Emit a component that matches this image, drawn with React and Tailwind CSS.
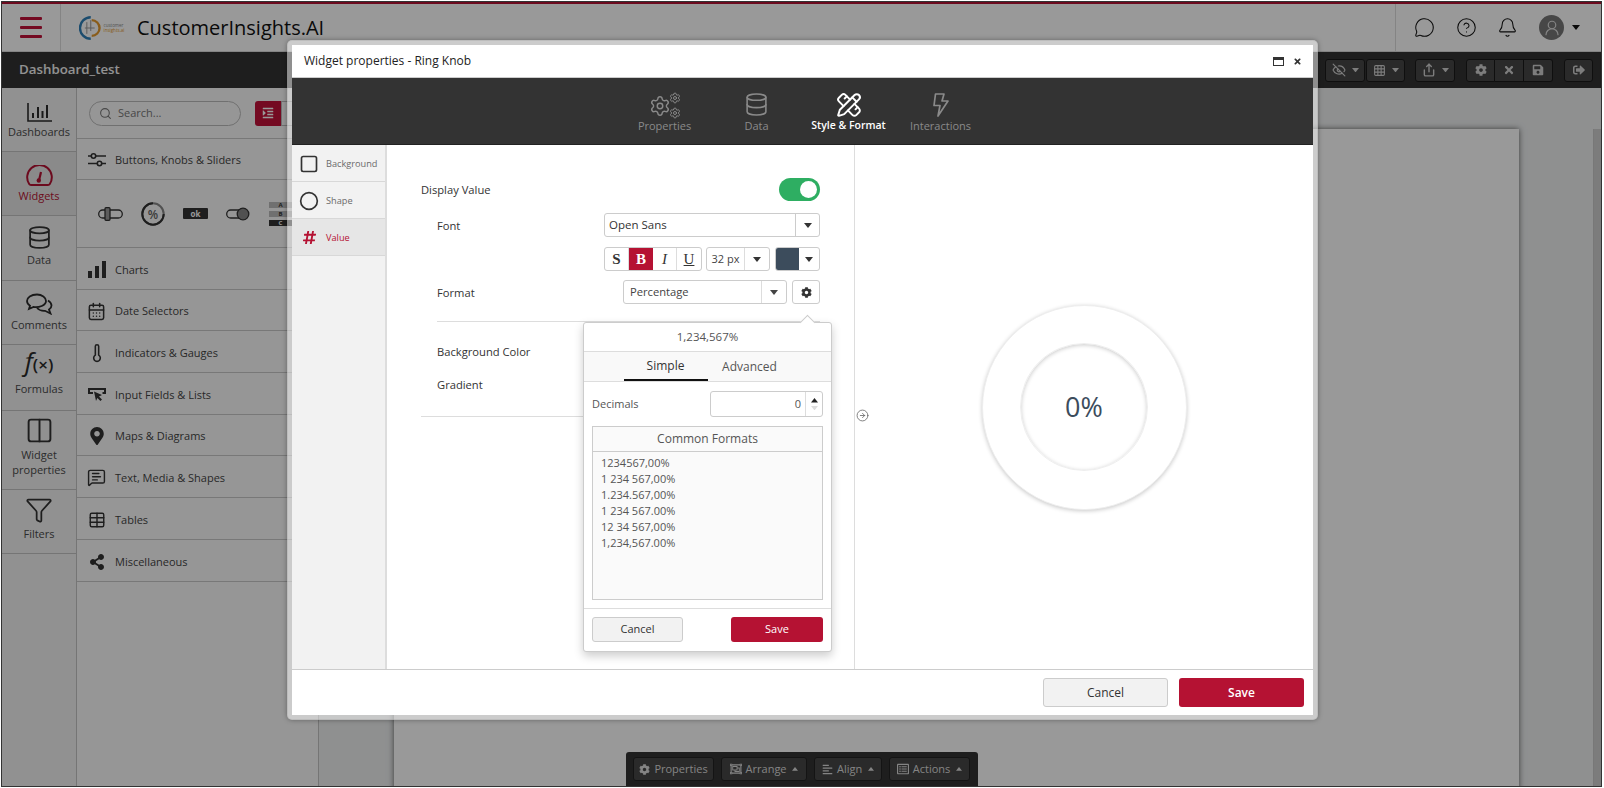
import React from "react";
import { Database, Columns2, Funnel, Thermometer, MessageSquareText, Table, Search, MessageCircle, CircleHelp, Bell, UserRound, Settings, PencilRuler, CircleArrowRight, EyeOff, Grid3x3, Share, Square, Circle, CalendarDays } from "lucide-react";
import { FaCog, FaTimes, FaSave, FaSignOutAlt, FaMapMarkerAlt, FaShareAlt, FaAlignLeft, FaRegObjectGroup, FaRegListAlt, FaIndent, FaHashtag } from "react-icons/fa";

function Caret({ up = false, className = "", w = 8 }) {
  return (
    <svg width={w} height={w * 0.625} viewBox="0 0 8 5" className={className} fill="currentColor">
      <path d={up ? "M0 5 L4 0 L8 5 Z" : "M0 0 L8 0 L4 5 Z"} />
    </svg>
  );
}

function SideItem({ h, label, icon, active }) {
  return (
    <div className={`flex flex-col items-center border-b border-[#c4c4c4] ${h} ${active ? "bg-[#e6e6e6] text-[#b51233]" : "text-[#333]"}`}>
      <div className="flex h-[36px] shrink-0 items-end justify-center pb-[2px]">{icon}</div>
      <div className={`text-center text-[11px] leading-[15px] ${active ? "text-[#b51233]" : "text-[#4a4a4a]"}`}>{label}</div>
    </div>
  );
}

function BarsIcon() {
  return (
    <svg width="25" height="19" viewBox="0 0 25 19" fill="none" stroke="#2b2b2b" strokeWidth="1.6">
      <path d="M1 0 V18 H25" />
      <path d="M6 15 V10 M11 15 V4 M15.5 15 V8 M20 15 V2" strokeWidth="2" />
    </svg>
  );
}

function GaugeIcon() {
  return (
    <svg width="27" height="21" viewBox="0 0 27 21" fill="none" stroke="#b51233" strokeWidth="2">
      <path d="M5 20 H22 Q23.2 20 23.8 19 A12.3 12.3 0 1 0 3.2 19 Q3.8 20 5 20 Z" />
      <path d="M13 15.5 L15 7" strokeWidth="2.2" />
      <circle cx="12.8" cy="15.5" r="2.2" fill="#b51233" stroke="none" />
    </svg>
  );
}

function CommentsIcon() {
  return (
    <svg width="28" height="22" viewBox="0 0 28 22" fill="none" stroke="#2b2b2b" strokeWidth="1.8">
      <path d="M12 1.5 C6 1.5 2 4.5 2 8 C2 10 3.2 11.6 5 12.7 L4 16 L8.5 14 C14 14.8 21 12.5 21 8 C21 4.5 17 1.5 12 1.5 Z" />
      <path d="M23 7.5 C25.5 9 26.5 10.5 26.5 12.5 C26.5 14.5 25.4 15.7 24 16.6 L25.5 20.5 L20 17.8 C16.5 18 13.8 17 12 15" />
    </svg>
  );
}

function SlidersIcon() {
  return (
    <svg width="18" height="14" viewBox="0 0 18 14" fill="none" stroke="#333" strokeWidth="1.6">
      <path d="M0 3 H18 M0 10.5 H18" />
      <circle cx="5.5" cy="3" r="2.2" fill="#fbfbfb" />
      <circle cx="11.5" cy="10.5" r="2.2" fill="#fbfbfb" />
    </svg>
  );
}

function InputIcon() {
  return (
    <svg width="18" height="14" viewBox="0 0 18 14" fill="#333">
      <path d="M0 0 H18 V6 H14.5 V4 H16 V2 H2 V4 H5 V6 H0 Z" />
      <path d="M6 3.5 L14 7 L11 8.4 L14 11.5 L12.4 13 L9.4 10 L8 13 Z" />
    </svg>
  );
}

function Row({ icon, label, h = "h-[42px]" }) {
  return (
    <div className={`flex items-center border-b border-[#c8c8c8] ${h}`}>
      <div className="flex w-[38px] justify-center pl-[1px] pt-[2px] text-[#333]">{icon}</div>
      <div className="pt-[3px] text-[11px] text-[#444]">{label}</div>
    </div>
  );
}

function DarkBtn({ children, className = "" }) {
  return (
    <div className={`flex h-[23px] items-center justify-center gap-[6px] rounded-[3px] border border-[#1a1a1a] bg-[#474747] text-[#d0d0d0] ${className}`}>
      {children}
    </div>
  );
}

function BarBtn({ icon, label, w }) {
  return (
    <div className={`flex h-[24px] items-center justify-center gap-[4px] rounded-[3px] border border-[#222] bg-[#474747] text-[11px] text-[#dcdcdc] ${w}`}>
      {icon}
      <span>{label}</span>
    </div>
  );
}

function ModalTab({ icon, label, active }) {
  return (
    <div className={`flex h-[66px] w-[92px] flex-col items-center pt-[14px] ${active ? "text-white" : "text-[#8a8a8a]"}`}>
      <div className="flex h-[25px] items-center justify-center">{icon}</div>
      <div className={`mt-[1px] leading-[15px] ${active ? "text-[10.5px] font-semibold" : "text-[11px]"}`}>{label}</div>
    </div>
  );
}

function SideTab({ icon, label, active }) {
  return (
    <div className={`flex h-[37px] items-center border-b border-[#d8d8d8] ${active ? "bg-[#e6e6e6] text-[#b51233]" : "text-[#333]"}`}>
      <div className="flex w-[34px] justify-center pt-[1px]">{icon}</div>
      <div className={`pt-[2px] text-[9.2px] ${active ? "text-[#b51233]" : "text-[#6a6a6a]"}`}>{label}</div>
    </div>
  );
}

function PropertiesIcon() {
  return (
    <div className="relative h-[24px] w-[32px]">
      <Settings size={22} strokeWidth={1.6} className="absolute left-0 top-[2px]" />
      <Settings size={12} strokeWidth={2} className="absolute right-[0px] top-[-1px]" />
      <Settings size={12} strokeWidth={2} className="absolute bottom-[-2px] right-[0px]" />
    </div>
  );
}

function BoltIcon() {
  return (
    <svg width="16" height="24" viewBox="0 0 16 24" fill="none" stroke="currentColor" strokeWidth="1.7" strokeLinejoin="round">
      <path d="M2.5 1 H11 L9 8 H15 L5 23 L7 12.5 H1 Z" />
    </svg>
  );
}

export default function App() {
  const formats = ["1234567,00%", "1 234 567,00%", "1.234.567,00%", "1 234 567.00%", "12 34 567,00%", "1,234,567.00%"];
  return (
    <div className="h-[788px] w-[1604px] overflow-hidden bg-white pl-[1px] pt-[1px] font-['Open_Sans',sans-serif]">
      <div className="relative flex h-[786px] w-[1601px] flex-col overflow-hidden border border-[#333] bg-white">
        {/* page header */}
        <div className="h-[2px] shrink-0 bg-[#b51233]" />
        <div className="flex h-[48px] shrink-0 items-center border-b border-[#ddd] bg-white">
          <div className="flex h-full w-[59px] flex-col items-center justify-center gap-[6px] border-r border-[#ddd]">
            <div className="h-[3px] w-[22px] rounded-[1px] bg-[#c2123a]" />
            <div className="h-[3px] w-[22px] rounded-[1px] bg-[#c2123a]" />
            <div className="h-[3px] w-[22px] rounded-[1px] bg-[#c2123a]" />
          </div>
          <div className="ml-[18px] flex w-[48px] items-center">
            <svg width="24" height="26" viewBox="0 0 24 26" fill="none" strokeWidth="2.4">
              <path d="M12 2 A11 11 0 0 0 12 24" stroke="#2e7fb8" />
              <path d="M13 5 A8 8 0 0 1 13 21" stroke="#e59a2c" />
              <path d="M8 7 V19 M12 5 V16 M6 13 H16" stroke="#999" strokeWidth="1" />
            </svg>
            <div className="ml-[1px] w-[24px] text-[4.5px] leading-[5px] text-[#8a8a8a]">
              <div>customer</div>
              <div className="text-[#e59a2c]">insights.ai</div>
            </div>
          </div>
          <div className="ml-[10px] text-[20px] font-medium text-[#111]">CustomerInsights.AI</div>
          <div className="ml-auto flex h-full w-[206px] items-center border-l border-[#ddd] text-[#111]">
            <MessageCircle size={21} strokeWidth={1.2} className="ml-[18px]" />
            <CircleHelp size={21} strokeWidth={1.2} className="ml-[21px]" />
            <Bell size={21} strokeWidth={1.2} className="ml-[20px]" />
            <div className="ml-[21px] flex h-[25px] w-[25px] items-center justify-center rounded-full bg-[#777]">
              <UserRound size={18} strokeWidth={1.6} className="text-[#ddd]" />
            </div>
            <Caret className="ml-[8px]" />
          </div>
        </div>
        {/* dashboard bar */}
        <div className="flex h-[36px] shrink-0 items-center bg-[#333] pl-[17px] pr-[8px]">
          <div className="text-[13.3px] font-semibold text-[#f4f4f4]">Dashboard_test</div>
          <div className="ml-auto flex items-center">
            <DarkBtn className="w-[40px]"><EyeOff size={14} /><Caret w={7} /></DarkBtn>
            <DarkBtn className="ml-[1px] w-[39px]"><Grid3x3 size={13} /><Caret w={7} /></DarkBtn>
            <DarkBtn className="ml-[10px] w-[40px]"><Share size={14} strokeWidth={2.4} /><Caret w={7} /></DarkBtn>
            <DarkBtn className="ml-[11px] w-[29px] rounded-r-none"><FaCog size={12} /></DarkBtn>
            <DarkBtn className="w-[29px] rounded-none border-l-0"><FaTimes size={12} /></DarkBtn>
            <DarkBtn className="w-[29px] rounded-l-none border-l-0"><FaSave size={12} /></DarkBtn>
            <DarkBtn className="ml-[11px] w-[29px]"><FaSignOutAlt size={12} /></DarkBtn>
          </div>
        </div>
        {/* main */}
        <div className="flex min-h-0 flex-1">
          <div className="w-[75px] shrink-0 border-r border-[#c4c4c4] bg-[#f2f2f2]">
            <SideItem h="h-[64px]" label="Dashboards" icon={<BarsIcon />} />
            <SideItem h="h-[64px]" active label="Widgets" icon={<GaugeIcon />} />
            <SideItem h="h-[65px]" label="Data" icon={<Database size={25} strokeWidth={1.7} />} />
            <SideItem h="h-[64px]" label="Comments" icon={<CommentsIcon />} />
            <SideItem h="h-[66px]" label="Formulas" icon={<div className="text-[26px] leading-[28px] text-[#2b2b2b]"><span className="italic">f</span><span className="text-[17px] font-semibold">(×)</span></div>} />
            <SideItem h="h-[79px]" label={<>Widget<br />properties</>} icon={<Columns2 size={29} strokeWidth={1.6} />} />
            <SideItem h="h-[64px]" label="Filters" icon={<Funnel size={28} strokeWidth={1.5} />} />
          </div>
          <div className="w-[242px] shrink-0 border-r border-[#c4c4c4] bg-[#fbfbfb]">
            <div className="flex h-[51px] items-center border-b border-[#c8c8c8] pl-[12px]">
              <div className="flex h-[25px] w-[152px] items-center rounded-full border border-[#bbb] pl-[9px] text-[#777]">
                <Search size={13} />
                <span className="ml-[6px] text-[11px]">Search...</span>
              </div>
              <div className="ml-[14px] flex h-[25px] w-[26px] items-center justify-center rounded-l-[3px] bg-[#c2123a] text-white"><FaIndent size={12} /></div>
              <div className="h-[25px] w-[26px] border border-[#bbb]" />
            </div>
            <Row h="h-[41px]" icon={<SlidersIcon />} label="Buttons, Knobs & Sliders" />
            <div className="flex h-[68px] items-center border-b border-[#c8c8c8] pl-[21px]">
              <svg width="25" height="14" viewBox="0 0 25 14" fill="none" stroke="#333" strokeWidth="1.3"><rect x="0.7" y="3" width="23.6" height="8" rx="4" /><rect x="7" y="0.7" width="5" height="12.6" rx="1" fill="#999" /></svg>
              <svg className="ml-[18px]" width="24" height="24" viewBox="0 0 24 24" fill="none"><circle cx="12" cy="12" r="10.7" stroke="#888" strokeWidth="2" /><path d="M12 1.3 A10.7 10.7 0 1 0 22.7 12" stroke="#333" strokeWidth="2" /><text x="12" y="16.5" textAnchor="middle" fontSize="12" fill="#666" fontWeight="600">%</text></svg>
              <div className="ml-[18px] flex h-[11px] w-[25px] items-center justify-center rounded-[1px] bg-[#333] text-[8px] font-bold text-white">ok</div>
              <svg className="ml-[18px]" width="24" height="14" viewBox="0 0 24 14" fill="none" stroke="#333" strokeWidth="1.3"><rect x="0.7" y="3" width="20" height="8" rx="4" /><circle cx="17" cy="7" r="5.8" fill="#888" /></svg>
              <div className="ml-[19px] flex flex-col gap-[3px] text-center text-[6px] font-bold leading-[6px]">
                <div className="h-[6px] w-[23px] bg-[#bbb] text-[#333]">A</div>
                <div className="h-[6px] w-[23px] bg-[#bbb] text-[#333]">B</div>
                <div className="h-[6px] w-[23px] bg-[#333] text-white">C</div>
              </div>
            </div>
            <Row icon={<svg width="18" height="17" viewBox="0 0 18 17" fill="#333"><rect y="10" width="4" height="7" /><rect x="7" y="5" width="4" height="12" /><rect x="14" width="4" height="17" /></svg>} label="Charts" />
            <Row h="h-[41px]" icon={<CalendarDays size={19} strokeWidth={1.9} />} label="Date Selectors" />
            <Row icon={<Thermometer size={20} strokeWidth={1.9} />} label="Indicators & Gauges" />
            <Row icon={<InputIcon />} label="Input Fields & Lists" />
            <Row h="h-[41px]" icon={<FaMapMarkerAlt size={18} />} label="Maps & Diagrams" />
            <Row icon={<MessageSquareText size={19} strokeWidth={1.8} />} label="Text, Media & Shapes" />
            <Row icon={<Table size={18} strokeWidth={1.9} />} label="Tables" />
            <Row icon={<FaShareAlt size={16} />} label="Miscellaneous" />
          </div>
          <div className="flex min-w-0 flex-1 bg-[#eef0f1] pl-[75px] pt-[41px]">
            <div className="h-[700px] w-[1125px] shrink-0 bg-white shadow-[0_0_6px_rgba(0,0,0,0.6)]" />
            <div className="ml-auto w-[8px] border-l border-[#c8c8c8] bg-[#cfcfcf]" />
          </div>
        </div>
        {/* bottom toolbar */}
        <div className="absolute bottom-0 left-[624px] flex h-[34px] w-[352px] items-center gap-[7px] rounded-t-[3px] bg-[#333] px-[7px]">
          <BarBtn w="w-[81px]" icon={<FaCog size={11} />} label="Properties" />
          <BarBtn w="w-[86px]" icon={<FaRegObjectGroup size={12} />} label={<>Arrange <Caret w={6} up className="ml-[3px] inline align-[2px]" /></>} />
          <BarBtn w="w-[68px]" icon={<FaAlignLeft size={11} />} label={<>Align <Caret w={6} up className="ml-[3px] inline align-[2px]" /></>} />
          <BarBtn w="w-[81px]" icon={<FaRegListAlt size={12} />} label={<>Actions <Caret w={6} up className="ml-[3px] inline align-[2px]" /></>} />
        </div>
        {/* overlay */}
        <div className="absolute inset-0 bg-black/40" />
        {/* modal */}
        <div className="absolute left-[285px] top-[38px] flex h-[680px] w-[1031px] flex-col rounded-[5px] border-[5px] border-white/50 bg-white bg-clip-padding text-[#333] shadow-[0_0_5px_rgba(0,0,0,0.35)]">
          <div className="flex h-[33px] shrink-0 items-center border-b border-[#ccc] pl-[12px] pr-[11px]">
            <div className="text-[12px] font-medium text-[#222]">Widget properties - Ring Knob</div>
            <div className="ml-auto flex items-center gap-[9px]">
              <div className="h-[9px] w-[11px] border border-[#333] border-t-[3px]" />
              <FaTimes size={9} />
            </div>
          </div>
          <div className="flex h-[67px] shrink-0 justify-center border-b border-[#222] bg-[#333]">
            <ModalTab icon={<PropertiesIcon />} label="Properties" />
            <ModalTab icon={<Database size={25} strokeWidth={1.5} />} label="Data" />
            <ModalTab active icon={<PencilRuler size={26} strokeWidth={1.8} />} label="Style & Format" />
            <ModalTab icon={<BoltIcon />} label="Interactions" />
          </div>
          <div className="flex min-h-0 flex-1">
            <div className="w-[95px] shrink-0 border-r-2 border-[#ddd] bg-[#f2f2f2]">
              <SideTab icon={<Square size={20} strokeWidth={2} />} label="Background" />
              <SideTab icon={<Circle size={20} strokeWidth={2} />} label="Shape" />
              <SideTab active icon={<FaHashtag size={15} />} label="Value" />
            </div>
            <div className="relative w-[468px] shrink-0 border-r border-[#ddd] px-[34px] pt-[33px] text-[11.2px]">
              <div className="flex h-[23px] items-center justify-between">
                <span className="pt-[2px] font-medium text-[#333]">Display Value</span>
                <div className="flex h-[23px] w-[41px] items-center justify-end rounded-full bg-[#2eae62] pr-[3px]">
                  <div className="h-[17px] w-[17px] rounded-full bg-white" />
                </div>
              </div>
              <div className="mt-[12px] flex h-[24px] items-center pl-[16px]">
                <span className="pt-[2px] font-medium">Font</span>
                <div className="ml-auto flex h-[24px] w-[216px] items-center rounded-[3px] border border-[#ccc] pl-[4px] text-[11.5px]">
                  <span>Open Sans</span>
                  <div className="ml-auto flex h-full w-[24px] items-center justify-center border-l border-[#ccc]"><Caret /></div>
                </div>
              </div>
              <div className="mt-[10px] flex h-[24px] justify-end">
                <div className="flex rounded-[3px] border border-[#ccc] font-['Liberation_Serif',serif] text-[15px]">
                  <div className="flex w-[24px] items-center justify-center border-r border-[#ddd] font-bold">S</div>
                  <div className="flex w-[24px] items-center justify-center bg-[#b51233] font-bold text-white">B</div>
                  <div className="flex w-[24px] items-center justify-center border-r border-[#ddd] italic">I</div>
                  <div className="flex w-[24px] items-center justify-center underline">U</div>
                </div>
                <div className="ml-[4px] flex w-[64px] items-center rounded-[3px] border border-[#ccc]">
                  <span className="flex-1 text-center text-[11px] text-[#444]">32 px</span>
                  <div className="flex h-full w-[25px] items-center justify-center border-l border-[#ddd]"><Caret /></div>
                </div>
                <div className="ml-[5px] flex w-[45px] rounded-[3px] border border-[#ccc]">
                  <div className="w-[23px] rounded-l-[2px] bg-[#3c4c5c]" />
                  <div className="flex flex-1 items-center justify-center"><Caret /></div>
                </div>
              </div>
              <div className="mt-[9px] flex h-[24px] items-center pl-[16px]">
                <span className="pt-[2px] font-medium">Format</span>
                <div className="ml-auto flex h-[24px] w-[164px] items-center rounded-[3px] border border-[#ccc] pl-[6px] text-[#444]">
                  <span>Percentage</span>
                  <div className="ml-auto flex h-full w-[25px] items-center justify-center border-l border-[#ddd]"><Caret /></div>
                </div>
                <div className="ml-[5px] flex h-[24px] w-[28px] items-center justify-center rounded-[3px] border border-[#ccc]"><FaCog size={11} /></div>
              </div>
              <div className="ml-[16px] mt-[17px] h-px bg-[#ddd]" />
              <div className="mt-[7px] flex h-[33px] items-center pl-[16px] pt-[14px] font-medium">Background Color</div>
              <div className="flex h-[33px] items-center pl-[16px] pt-[14px] font-medium">Gradient</div>
              <div className="mt-[21px] h-px bg-[#ddd]" />
              {/* popover */}
              <div className="absolute left-[196px] top-[177px] flex h-[330px] w-[249px] flex-col rounded-[3px] border border-[#ccc] bg-white text-[11px] text-[#555] shadow-[0_4px_10px_rgba(0,0,0,0.2)]">
                <div className="absolute right-[18px] top-[-6px] h-[11px] w-[11px] rotate-45 border-l border-t border-[#ccc] bg-white" />
                <div className="flex h-[29px] shrink-0 items-center justify-center border-b border-[#ddd] text-[11.5px]">1,234,567%</div>
                <div className="flex h-[30px] shrink-0 justify-center border-b border-[#ddd] bg-[#f9f9f9] text-[12px]">
                  <div className="flex w-[84px] items-center justify-center border-b-2 border-[#111] font-medium text-[#333]">Simple</div>
                  <div className="flex w-[84px] items-center justify-center">Advanced</div>
                </div>
                <div className="flex min-h-0 flex-1 flex-col px-[8px] pt-[9px]">
                  <div className="flex h-[26px] shrink-0 items-center">
                    <span>Decimals</span>
                    <div className="ml-auto flex h-[26px] w-[113px] rounded-[3px] border border-[#ccc]">
                      <span className="flex flex-1 items-center justify-end pr-[4px]">0</span>
                      <div className="flex w-[17px] flex-col items-center justify-center gap-[3px] border-l border-[#ddd]">
                        <Caret w={7} up className="text-[#222]" />
                        <Caret w={7} className="text-[#ddd]" />
                      </div>
                    </div>
                  </div>
                  <div className="mt-[9px] flex h-[174px] shrink-0 flex-col border border-[#ccc] bg-[#fafafa]">
                    <div className="flex h-[25px] shrink-0 items-center justify-center border-b border-[#ccc] text-[12px]">Common Formats</div>
                    <div className="px-[8px] pt-[3px] leading-[16px]">
                      {formats.map((f) => <div key={f}>{f}</div>)}
                    </div>
                  </div>
                </div>
                <div className="flex h-[43px] shrink-0 items-start justify-between border-t border-[#ddd] px-[8px] pt-[8px]">
                  <div className="flex h-[25px] w-[91px] items-center justify-center rounded-[3px] border border-[#ccc] bg-[#f2f2f2] text-[#333]">Cancel</div>
                  <div className="flex h-[25px] w-[92px] items-center justify-center rounded-[3px] bg-[#b51233] text-white">Save</div>
                </div>
              </div>
              <CircleArrowRight size={13} strokeWidth={1.5} className="absolute right-[-15px] top-[264px] text-[#666]" />
            </div>
            <div className="flex min-w-0 flex-1 items-center justify-center">
              <div className="flex h-[205px] w-[205px] items-center justify-center rounded-full border border-[#eee] bg-white shadow-[0_1px_4px_rgba(0,0,0,0.22)]">
                <div className="flex h-[128px] w-[128px] items-center justify-center rounded-full border border-[#eee] bg-white text-[27px] text-[#3c4c5c] shadow-[inset_0_1px_4px_rgba(0,0,0,0.22)]">0%</div>
              </div>
            </div>
          </div>
          <div className="flex h-[46px] shrink-0 items-center justify-end gap-[11px] border-t border-[#ccc] pr-[9px] text-[12px]">
            <div className="flex h-[29px] w-[125px] items-center justify-center rounded-[3px] border border-[#ccc] bg-[#f2f2f2]">Cancel</div>
            <div className="flex h-[29px] w-[125px] items-center justify-center rounded-[3px] bg-[#b51233] font-semibold text-white">Save</div>
          </div>
        </div>
      </div>
    </div>
  );
}
